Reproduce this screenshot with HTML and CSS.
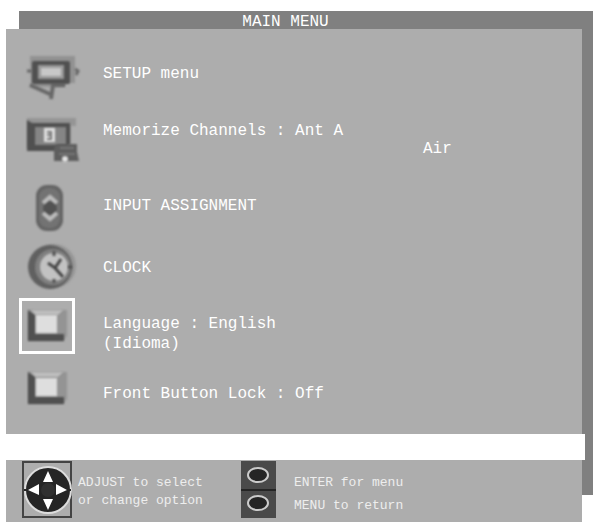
FILE: index.html
```html
<!DOCTYPE html>
<html lang="en">
<head>
<meta charset="utf-8">
<title>Main Menu</title>
<link rel="stylesheet" href="styles.css">
</head>
<body>
<main class="screen">
  <h1 class="title">MAIN MENU</h1>
  <div class="panel">
    <nav class="menu">
      <button class="item">
        <svg class="icon" viewBox="0 0 56 56" aria-hidden="true">
          <path d="M11 10H56V37H46V41H12Z" fill="#929292"/>
          <path d="M8 25H13M56 23L59 25L57 29" stroke="#686868" stroke-width="3" fill="none"/>
          <path d="M11 39L33 49M32 53L34 39H46" stroke="#686868" stroke-width="4" fill="none"/>
          <rect x="13" y="15" width="38" height="23" rx="2" fill="#505050"/>
          <rect x="19" y="19" width="26" height="14" fill="#999"/>
          <rect x="22" y="22" width="20" height="8" fill="#c8c8c8"/>
        </svg>
        <span class="label">SETUP menu</span>
      </button>
      <button class="item">
        <svg class="icon" viewBox="0 0 56 56" aria-hidden="true">
          <path d="M8 6H57V14H52V36H8Z" fill="#959595"/>
          <path d="M8 8L13 11H51V32L45 39H8Z" fill="#505050"/>
          <rect x="16" y="15" width="31" height="18" fill="#858585"/>
          <path d="M25 16H36V30H25Z" fill="#e0e0e0"/>
          <path d="M28 20H32V23H28M32 23V27H28" stroke="#777" stroke-width="2" fill="none"/>
          <path d="M38 32H58V40L60 49H35V36Z" fill="#5e5e5e"/>
          <path d="M41 36H55M40 42H56" stroke="#777" stroke-width="2"/>
          <circle cx="46" cy="47" r="3" fill="#e4e4e4"/>
        </svg>
        <span class="label">Memorize Channels : Ant A<span class="source">Air</span></span>
      </button>
      <button class="item">
        <svg class="icon" viewBox="0 0 56 56" aria-hidden="true">
          <rect x="17" y="7" width="27" height="46" rx="11" fill="#646464"/>
          <rect x="20" y="10" width="21" height="40" rx="9" fill="#737373"/>
          <circle cx="31" cy="30" r="7" fill="#525252"/>
          <path d="M24 25L31 19L38 25" stroke="#bcbcbc" stroke-width="4" fill="none"/>
          <path d="M24 35L31 41L38 35" stroke="#bcbcbc" stroke-width="4" fill="none"/>
        </svg>
        <span class="label">INPUT ASSIGNMENT</span>
      </button>
      <button class="item item-clock">
        <svg class="icon" viewBox="0 0 56 56" aria-hidden="true">
          <circle cx="35" cy="26" r="22" fill="#979797"/>
          <ellipse cx="31" cy="27" rx="22" ry="22" fill="#606060"/>
          <circle cx="34" cy="27" r="18" fill="#808080"/>
          <circle cx="35" cy="27" r="14" fill="#c2c2c2"/>
          <path d="M29 23L36 28L42 19M36 28L44 37" stroke="#444" stroke-width="3" fill="none"/>
          <path d="M35 11V16M35 39V43M49 27H53" stroke="#505050" stroke-width="3"/>
        </svg>
        <span class="label">CLOCK</span>
      </button>
      <button class="item item-language" aria-current="true">
        <svg class="icon" viewBox="0 0 56 56" aria-hidden="true">
          <path d="M9 12H48V38L44 43H9Z" fill="#949494"/>
          <path d="M9 12L16 17V36H45V43H9Z" fill="#505050"/>
          <path d="M12 12H44L39 17H17Z" fill="#bdbdbd"/>
          <rect x="17" y="17" width="21" height="18" fill="#dedede"/>
        </svg>
        <span class="label">Language : English<br>(Idioma)</span>
      </button>
      <button class="item item-lock">
        <svg class="icon" viewBox="0 0 56 56" aria-hidden="true">
          <path d="M9 12H48V39L44 44H9Z" fill="#949494"/>
          <path d="M9 12L16 17V37H45V44H9Z" fill="#505050"/>
          <path d="M12 12H44L39 17H17Z" fill="#bdbdbd"/>
          <rect x="17" y="18" width="21" height="18" fill="#dedede"/>
        </svg>
        <span class="label">Front Button Lock : Off</span>
      </button>
    </nav>
    <div class="message"></div>
    <footer class="help">
      <svg class="pad" viewBox="0 0 50 57" aria-hidden="true">
        <rect x="1" y="1" width="48" height="55" fill="#adadad" stroke="#444" stroke-width="2"/>
        <ellipse cx="26" cy="29" rx="23" ry="23" fill="#252525" stroke="#ddd" stroke-width="2"/>
        <path d="M2 29H49" stroke="#252525" stroke-width="2"/>
        <circle cx="26" cy="29" r="7" fill="#303030"/>
        <path d="M26 10L31 21H21ZM26 49L31 38H21ZM6 29L17 23V34ZM45 29L34 23V34Z" fill="#fff"/>
      </svg>
      <p class="hint hint-adjust">ADJUST to select<br>or change option</p>
      <svg class="keys" viewBox="0 0 35 57" aria-hidden="true">
        <rect width="35" height="57" fill="#4a4a4a"/>
        <path d="M0 29H35" stroke="#252525" stroke-width="2"/>
        <g fill="#252525" stroke="#ccc" stroke-width="2">
          <ellipse cx="17" cy="14" rx="10" ry="7"/>
          <ellipse cx="17" cy="42" rx="10" ry="7"/>
        </g>
      </svg>
      <p class="hint hint-keys">ENTER for menu<br>MENU to return</p>
    </footer>
  </div>
</main>
</body>
</html>
```
FILE: styles.css
```css
* {
  box-sizing: border-box;
}

body {
  margin: 0;
  padding: 11px 5px 0 6px;
  background: #fff;
  color: #fff;
  font: 16px/18px "Liberation Mono", "Courier New", monospace;
}

.screen {
  position: relative;
  z-index: 0;
}

/* Drop shadow slab behind the panel */
.screen::before {
  content: "";
  position: absolute;
  z-index: -1;
  inset: 0 0 27px 13px;
  background: #808080;
}

.title {
  margin: 0 28px 0 0;
  padding-top: 4px;
  font-size: 16px;
  font-weight: normal;
  line-height: 14px;
  text-align: center;
}

.panel {
  margin-right: 11px;
  background: #adadad;
}

.menu {
  display: flex;
  flex-direction: column;
  padding: 12px 12px 13px 13px;
}

.item {
  display: flex;
  align-items: center;
  gap: 28px;
  min-height: 66px;
  padding: 0;
  border: 0;
  background: none;
  color: inherit;
  font: inherit;
  text-align: left;
  cursor: pointer;
}

.item-clock,
.item-language {
  min-height: 58px;
}

.icon {
  flex: none;
  width: 56px;
  height: 56px;
  overflow: visible;
}

.icon > * {
  filter: blur(0.8px);
}

.item[aria-current] .icon {
  outline: 3px solid #fff;
  outline-offset: -3px;
}

.item-language .label {
  padding-top: 16px;
  line-height: 20px;
}

.item-lock .label {
  padding-top: 12px;
}

.source {
  display: block;
  padding-left: 320px;
}

.message {
  height: 26px;
  margin-right: -3px;
  background: #fff;
}

.help {
  display: flex;
  align-items: center;
  padding: 1px 16px 4px;
  color: #eee;
  font-size: 13px;
}

.pad {
  flex: none;
  width: 50px;
  height: 57px;
}

.keys {
  flex: none;
  width: 35px;
  height: 57px;
}

.hint {
  margin: 0;
  white-space: nowrap;
}

.hint-adjust {
  width: 169px;
  padding: 4px 0 0 6px;
}

.hint-keys {
  padding: 8px 0 0 18px;
  line-height: 23px;
}
```
